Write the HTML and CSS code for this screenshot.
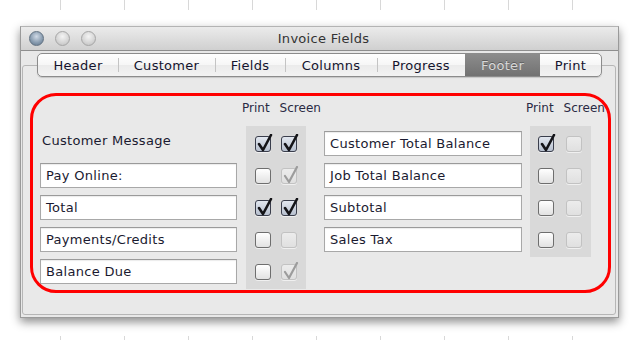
FILE: index.html
```html
<!DOCTYPE html>
<html lang="en">

<head>
    <meta charset="UTF-8">
    <meta name="viewport" content="width=device-width, initial-scale=1.0">
    <title>Invoice Fields</title>
    <link rel="stylesheet" href="styles.css">
</head>

<body>
    <div class="ruler"></div>

    <div class="window">
        <div class="titlebar">
            <div class="lights">
                <span class="light graphite"></span>
                <span class="light"></span>
                <span class="light"></span>
            </div>
            <div class="title">Invoice Fields</div>
        </div>

        <div class="window-body">
            <div class="tabs">
                <div class="tab tab-header">Header</div>
                <div class="tab tab-customer">Customer</div>
                <div class="tab tab-fields">Fields</div>
                <div class="tab tab-columns">Columns</div>
                <div class="tab tab-progress">Progress</div>
                <div class="tab tab-footer selected">Footer</div>
                <div class="tab tab-print">Print</div>
            </div>

            <div class="tabbox">
                <div class="content">
                    <!-- left group -->
                    <div class="group group-left">
                        <div class="fields">
                            <div class="label">Customer Message</div>
                            <div class="field">Pay Online:</div>
                            <div class="field">Total</div>
                            <div class="field">Payments/Credits</div>
                            <div class="field">Balance Due</div>
                        </div>
                        <div class="opts">
                            <div class="opt-head"><span>Print</span><span>Screen</span></div>
                            <div class="panel">
                                <div class="opt-row">
                                    <span class="cb checked"><svg viewBox="0 0 19 19"><path d="M5 10 L9 16 L17 1"/></svg></span>
                                    <span class="cb checked"><svg viewBox="0 0 19 19"><path d="M5 10 L9 16 L17 1"/></svg></span>
                                </div>
                                <div class="opt-row">
                                    <span class="cb"></span>
                                    <span class="cb disabled checked"><svg viewBox="0 0 19 19"><path d="M5 10 L9 16 L17 1"/></svg></span>
                                </div>
                                <div class="opt-row">
                                    <span class="cb checked"><svg viewBox="0 0 19 19"><path d="M5 10 L9 16 L17 1"/></svg></span>
                                    <span class="cb checked"><svg viewBox="0 0 19 19"><path d="M5 10 L9 16 L17 1"/></svg></span>
                                </div>
                                <div class="opt-row">
                                    <span class="cb"></span>
                                    <span class="cb disabled"></span>
                                </div>
                                <div class="opt-row">
                                    <span class="cb"></span>
                                    <span class="cb disabled checked"><svg viewBox="0 0 19 19"><path d="M5 10 L9 16 L17 1"/></svg></span>
                                </div>
                            </div>
                        </div>
                    </div>

                    <!-- right group -->
                    <div class="group group-right">
                        <div class="fields">
                            <div class="field">Customer Total Balance</div>
                            <div class="field">Job Total Balance</div>
                            <div class="field">Subtotal</div>
                            <div class="field">Sales Tax</div>
                        </div>
                        <div class="opts">
                            <div class="opt-head"><span>Print</span><span>Screen</span></div>
                            <div class="panel">
                                <div class="opt-row">
                                    <span class="cb checked"><svg viewBox="0 0 19 19"><path d="M5 10 L9 16 L17 1"/></svg></span>
                                    <span class="cb disabled"></span>
                                </div>
                                <div class="opt-row">
                                    <span class="cb"></span>
                                    <span class="cb disabled"></span>
                                </div>
                                <div class="opt-row">
                                    <span class="cb"></span>
                                    <span class="cb disabled"></span>
                                </div>
                                <div class="opt-row">
                                    <span class="cb"></span>
                                    <span class="cb disabled"></span>
                                </div>
                            </div>
                        </div>
                    </div>
                </div>
            </div>
        </div>

        <!-- red annotation drawn over the footer fields -->
        <div class="highlight"></div>
    </div>

    <div class="ruler ruler-bottom"></div>
</body>

</html>
```

FILE: styles.css
```css
* {
    box-sizing: border-box;
}

body {
    margin: 0;
    width: 633px;
    height: 340px;
    overflow: hidden;
    background: #fff;
    font-family: 'DejaVu Sans', 'Liberation Sans', sans-serif;
    font-size: 13px;
    color: #1a1a30;
}

.ruler {
    height: 10px;
    background-image: linear-gradient(to right, #d8d8d8 1px, transparent 1px);
    background-size: 64px 100%;
    background-position: 60px 0;
}

.ruler-bottom {
    height: 4px;
    margin-top: 18px;
}

.window {
    position: relative;
    margin: 16px 0 0 20px;
    width: 599px;
    height: 292px;
    background: #e8e8e8;
    border: 1px solid #9a9a9a;
    border-top-color: #b4b4b4;
    box-shadow: 0 4px 9px rgba(0, 0, 0, 0.45);
    display: flex;
    flex-direction: column;
}

.titlebar {
    height: 24px;
    flex: none;
    display: grid;
    grid-template-columns: 1fr auto 1fr;
    align-items: center;
    padding-left: 8px;
    background: linear-gradient(#ebebeb, #d0d0d0);
    border-bottom: 1px solid #8e8e8e;
}

.lights {
    display: flex;
    gap: 11px;
}

.light {
    width: 15px;
    height: 15px;
    border-radius: 50%;
    border: 1px solid #a6a6a6;
    background: radial-gradient(circle at 50% 35%, #f4f4f4, #d4d4d4 60%, #bcbcbc);
}

.light.graphite {
    border-color: #627282;
    background: radial-gradient(circle at 50% 35%, #d0dae6, #8599ad 60%, #60748a);
}

.title {
    color: #333;
    font-size: 13px;
    letter-spacing: 0.3px;
}

.window-body {
    flex: 1;
    display: flex;
    flex-direction: column;
    padding: 0 2px 2px 1px;
}

.tabs {
    position: relative;
    z-index: 1;
    display: flex;
    width: 565px;
    height: 24px;
    margin: 2px 0 0 15px;
    border: 1px solid #8c8c8c;
    border-radius: 5px;
    overflow: hidden;
    background: linear-gradient(#ffffff, #f6f6f6 50%, #ebebeb 51%, #f3f3f3);
    box-shadow: 0 1px 1px rgba(0, 0, 0, 0.15);
}

.tab {
    display: flex;
    align-items: center;
    justify-content: center;
    color: #14142e;
    letter-spacing: 0.3px;
    background-image: linear-gradient(#c4c4c4, #c4c4c4);
    background-size: 1px 14px;
    background-repeat: no-repeat;
    background-position: left center;
}

.tab-header { width: 80px; background-image: none; }
.tab-customer { width: 97px; }
.tab-fields { width: 70px; }
.tab-columns { width: 92px; }
.tab-progress { width: 88px; }
.tab-footer { width: 75px; }
.tab-print { width: 61px; }

.tab.selected {
    color: #d8d8d8;
    background: linear-gradient(#8c8c8c, #727272);
    text-shadow: 0 -1px 0 rgba(0, 0, 0, 0.3);
}

.tab.selected + .tab {
    background-image: none;
}

.tabbox {
    flex: 1;
    margin-top: -12px;
    border: 1px solid #b6b6b6;
    border-radius: 3px;
    background: #e9e9e9;
}

.content {
    display: flex;
    gap: 18px;
    padding: 34px 0 0 17px;
}

.group {
    display: flex;
    gap: 9px;
}

.group-right {
    gap: 8px;
}

.fields {
    display: flex;
    flex-direction: column;
    gap: 7px;
    padding-top: 31px;
    width: 197px;
}

.group-right .fields {
    width: 198px;
}

.label,
.field {
    height: 25px;
    line-height: 23px;
    letter-spacing: 0.3px;
    white-space: nowrap;
}

.label {
    padding-left: 2px;
    line-height: 19px;
}

.field {
    padding-left: 5px;
    background: #fff;
    border: 1px solid #a8a8a8;
    border-top-color: #9a9a9a;
    box-shadow: inset 0 1px 1px rgba(0, 0, 0, 0.08);
}

.opts {
    width: 60px;
}

.group-right .opts {
    width: 61px;
}

.opt-head {
    display: flex;
    gap: 10px;
    height: 16px;
    margin: 0 0 10px -4px;
    line-height: 16px;
    font-size: 12px;
    color: #2a2a44;
    white-space: nowrap;
}

.panel {
    padding: 5px 9px;
    display: flex;
    flex-direction: column;
    gap: 7px;
    background: #d9d9d9;
}

.group-right .panel {
    padding: 5px 8px 5px 8px;
}

.opt-row {
    height: 25px;
    display: flex;
    align-items: center;
    gap: 10px;
}

.group-right .opt-row {
    gap: 12px;
}

.cb {
    width: 16px;
    height: 16px;
    flex: none;
    display: flex;
    justify-content: center;
    align-items: flex-end;
    border: 1px solid #6e6e6e;
    border-radius: 3px;
    background: linear-gradient(#ffffff, #f0f0f0 50%, #e2e2e2);
    box-shadow: 0 1px 0 rgba(255, 255, 255, 0.6);
}

.cb.checked {
    border: 1.5px solid #3a3e4c;
    background: linear-gradient(#e2e7ef, #b7c0cf);
}

.cb.disabled {
    border: 1px solid #c2c2c2;
    background: linear-gradient(#ececec, #e0e0e0);
}

.cb svg {
    flex: none;
    width: 19px;
    height: 19px;
    margin-bottom: -2px;
}

.cb svg path {
    fill: none;
    stroke: #141418;
    stroke-width: 2.6;
    stroke-linecap: round;
    stroke-linejoin: round;
}

.cb.disabled svg path {
    stroke: #9c9c9c;
    stroke-width: 2.2;
}

.highlight {
    position: absolute;
    left: 9px;
    top: 66px;
    width: 581px;
    height: 200px;
    border: 3px solid #ff0000;
    border-radius: 26px;
    pointer-events: none;
}
```
